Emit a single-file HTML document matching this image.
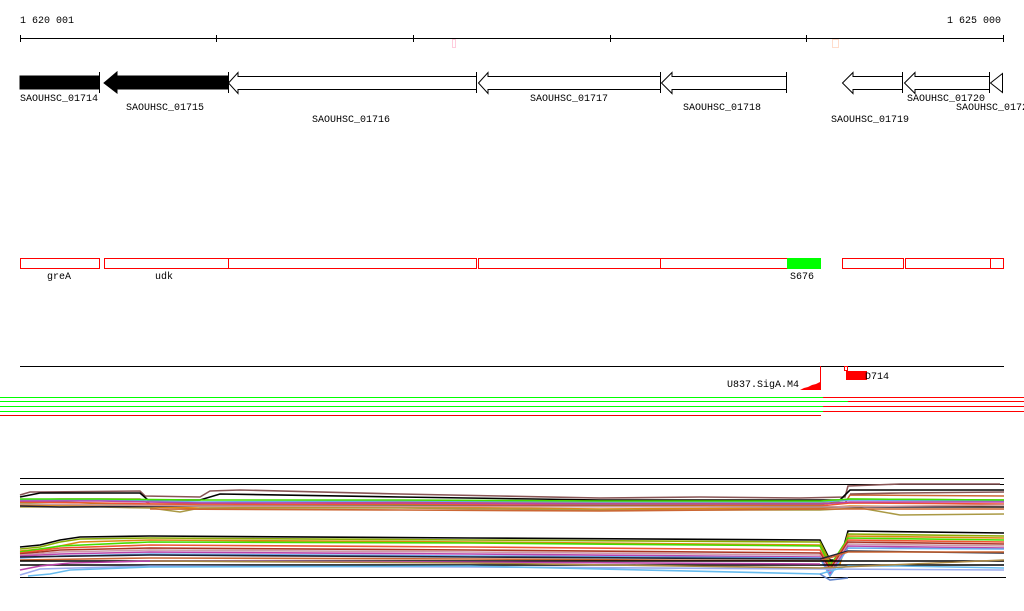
<!DOCTYPE html>
<html><head><meta charset="utf-8"><style>
html,body{margin:0;padding:0;background:#fff;width:1024px;height:611px;overflow:hidden}
svg{display:block}
text{font-family:"Liberation Mono","DejaVu Sans Mono",monospace;font-size:10px;fill:#000}
</style></head><body>
<svg width="1024" height="611" viewBox="0 0 1024 611" xmlns="http://www.w3.org/2000/svg">
<text x="20" y="23">1 620 001</text>
<text x="947" y="23">1 625 000</text>
<g fill="#000">
<rect x="20" y="38" width="984" height="1"/>
<rect x="20" y="35" width="1" height="7"/><rect x="216" y="35" width="1" height="7"/>
<rect x="413" y="35" width="1" height="7"/><rect x="610" y="35" width="1" height="7"/>
<rect x="806" y="35" width="1" height="7"/><rect x="1003" y="35" width="1" height="7"/>
</g>
<rect x="452.5" y="39.5" width="3" height="8" fill="none" stroke="#fcd"/>
<rect x="832.5" y="39.5" width="6" height="8" fill="none" stroke="#fdc"/>
<g stroke="#000" stroke-width="1">
<rect x="20" y="76" width="79" height="13" fill="#000"/>
<line x1="99.5" y1="72" x2="99.5" y2="93"/>
<polygon points="104,83 117,72 117,76 228,76 228,89 117,89 117,93" fill="#000"/>
<polygon points="228.5,83 238,72.5 238,76.5 476.5,76.5 476.5,89.5 238,89.5 238,93.5" fill="#fff"/>
<line x1="228.5" y1="72" x2="228.5" y2="93"/><line x1="476.5" y1="72" x2="476.5" y2="93"/>
<polygon points="478.5,83 488,72.5 488,76.5 660.5,76.5 660.5,89.5 488,89.5 488,93.5" fill="#fff"/>
<line x1="660.5" y1="72" x2="660.5" y2="93"/>
<polygon points="661.5,83 672,72.5 672,76.5 786.5,76.5 786.5,89.5 672,89.5 672,93.5" fill="#fff"/>
<line x1="786.5" y1="72" x2="786.5" y2="93"/>
<polygon points="842.5,83 853,72.5 853,76.5 902.5,76.5 902.5,89.5 853,89.5 853,93.5" fill="#fff"/>
<line x1="902.5" y1="72" x2="902.5" y2="93"/>
<polygon points="904.5,83 915,72.5 915,76.5 989.5,76.5 989.5,89.5 915,89.5 915,93.5" fill="#fff"/>
<line x1="989.5" y1="72" x2="989.5" y2="93"/>
<polygon points="990.5,83 1002.5,73.5 1002.5,92.5" fill="#fff"/>
</g>
<text x="20" y="101">SAOUHSC_01714</text>
<text x="126" y="110">SAOUHSC_01715</text>
<text x="312" y="122">SAOUHSC_01716</text>
<text x="530" y="101">SAOUHSC_01717</text>
<text x="683" y="110">SAOUHSC_01718</text>
<text x="831" y="122">SAOUHSC_01719</text>
<text x="907" y="101">SAOUHSC_01720</text>
<text x="956" y="110">SAOUHSC_0172</text>
<g fill="none" stroke="#f00" stroke-width="1">
<rect x="20.5" y="258.5" width="79" height="10"/>
<rect x="104.5" y="258.5" width="372" height="10"/>
<line x1="228.5" y1="258" x2="228.5" y2="269"/>
<rect x="478.5" y="258.5" width="309" height="10"/>
<line x1="660.5" y1="258" x2="660.5" y2="269"/>
<rect x="842.5" y="258.5" width="61" height="10"/>
<rect x="905.5" y="258.5" width="98" height="10"/>
<line x1="990.5" y1="258" x2="990.5" y2="269"/>
</g>
<rect x="787" y="258" width="34" height="11" fill="#0f0"/>
<text x="47" y="279">greA</text>
<text x="155" y="279">udk</text>
<text x="790" y="279">S676</text>
<rect x="20" y="366" width="984" height="1" fill="#000"/>
<rect x="820" y="366" width="1" height="24" fill="#f00"/>
<polygon points="800,390 804,388 808,387 812,385 816,384 820,382 821,382 821,390" fill="#f00"/>
<text x="727" y="387">U837.SigA.M4</text>
<rect x="844.5" y="366.5" width="3" height="4" fill="none" stroke="#f00"/>
<rect x="846" y="371" width="21" height="9" fill="#f00"/>
<text x="865" y="379">D714</text>
<rect x="0" y="397" width="823" height="1" fill="#0f0"/><rect x="823" y="397" width="201" height="1" fill="#f00"/>
<rect x="0" y="401" width="848" height="1" fill="#0f0"/><rect x="848" y="401" width="176" height="1" fill="#f00"/>
<rect x="0" y="406" width="823" height="1" fill="#0f0"/><rect x="823" y="406" width="201" height="1" fill="#f00"/>
<rect x="0" y="411" width="823" height="1" fill="#0f0"/><rect x="823" y="411" width="201" height="1" fill="#f00"/>
<rect x="0" y="415" width="821" height="1" fill="#e00"/>
<g fill="#000">
<rect x="20" y="478" width="984" height="1"/>
<rect x="20" y="484" width="984" height="1"/>
<rect x="20" y="577" width="986" height="1"/>
</g>
<g fill="none" stroke-width="1.6">
<polyline stroke="#855" points="20,495 30,492 40,492 140,491 145,496 200,497 210,491 240,490 400,494 500,496 600,498 700,497 800,498 845,497 848,486 900,484 1000,484"/>
<polyline stroke="#000" points="20,497 40,493 140,493 148,500 200,500 220,494 400,497 600,500 800,500 840,500 850,490 1004,490"/>
<polyline stroke="#c63" points="20,500 60,499 140,499 150,504 400,502 600,503 820,503 845,503 850,495 1004,496"/>
<polyline stroke="#8a0" points="20,503 60,502 160,506 400,505 600,505 820,505 850,499 1004,500"/>
<polyline stroke="#6ae" points="20,500 100,500 200,502 400,501 600,502 820,502 850,500 1004,501"/>
<polyline stroke="#e53" points="20,502 100,503 200,505 400,504 600,506 820,506 850,503 1004,504"/>
<polyline stroke="#b4a" points="20,501 100,501 200,503 400,503 600,504 820,504 850,502 1004,502"/>
<polyline stroke="#d81" points="20,505 100,506 200,508 400,507 600,509 820,508 850,506 1004,507"/>
<polyline stroke="#4d0" points="20,499 100,499 200,500 400,500 600,501 820,501 850,499 1004,500"/>
<polyline stroke="#a94" points="20,507 100,507 150,508 180,512 200,508 400,508 600,510 820,510 860,508 900,515 1004,514"/>
<polyline stroke="#223" points="20,506 60,507 200,506 400,506 820,507 1004,507"/>
<polyline stroke="#c99" points="20,504 200,506 820,507 1004,505"/>
<polyline stroke="#c63" points="150,509 400,510 600,511 820,509 1004,509"/>
<polyline stroke="#855" points="850,494 900,493 1004,492"/>
</g>
<g fill="none" stroke-width="1.6">
<polyline stroke="#000" points="20,547 40,545 60,540 80,537 150,536 470,538 820,540 830,560 840,560 848,531 1004,533"/>
<polyline stroke="#8a0" points="20,549 40,547 60,542 80,539 150,538 470,540 820,542 830,562 840,562 848,534 1004,536"/>
<polyline stroke="#d81" points="20,551 50,548 80,542 150,540 470,542 820,545 830,564 840,564 848,536 1004,538"/>
<polyline stroke="#4d0" points="20,552 60,546 150,542 470,543 820,546 830,566 848,538 1004,540"/>
<polyline stroke="#e53" points="20,553 60,548 150,545 470,547 820,550 830,568 848,540 1004,542"/>
<polyline stroke="#a32" points="20,554 60,550 150,548 470,550 820,553 830,570 848,542 1004,544"/>
<polyline stroke="#c9a" points="20,555 60,552 150,550 470,552 820,555 830,572 848,544 1004,546"/>
<polyline stroke="#b4a" points="20,556 60,554 150,552 470,554 820,557 830,574 848,546 1004,548"/>
<polyline stroke="#6ae" points="20,558 60,556 150,554 470,556 820,558 830,576 848,548 1004,549"/>
<polyline stroke="#223" points="20,557 150,555 470,557 820,559 848,551 1004,553"/>
<polyline stroke="#c63" points="20,560 150,558 470,559 820,561 848,552 1004,552"/>
<polyline stroke="#000" points="20,561 1004,561"/>
<polyline stroke="#000" points="20,565 1004,565"/>
<polyline stroke="#b4a" points="20,570 40,566 70,563 150,561 470,562 820,564"/>
<polyline stroke="#9ae" points="20,575 40,569 150,566 470,567 820,569 1004,570"/>
<polyline stroke="#6be" points="28,576 50,574 70,570 150,567 470,566 820,574 848,566 900,566 1004,568"/>
<polyline stroke="#a84" points="150,561 470,563 820,568 1004,560"/>
<polyline stroke="#68c" points="820,574 830,580 848,578"/>
</g>
</svg>
</body></html>
